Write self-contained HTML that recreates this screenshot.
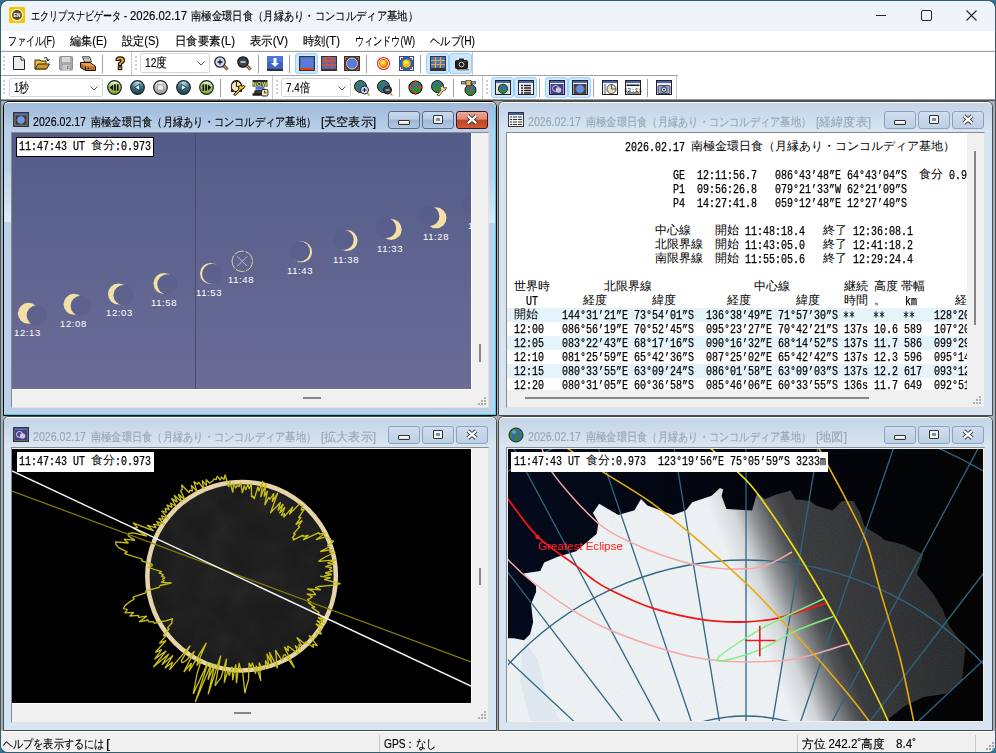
<!DOCTYPE html><html><head><meta charset="utf-8"><style>
*{margin:0;padding:0;box-sizing:border-box}
html,body{width:996px;height:753px;overflow:hidden;background:#2c7490;font-family:"Liberation Sans",sans-serif;font-size:12px;color:#000}
#win{position:absolute;left:0;top:0;width:996px;height:753px;overflow:hidden;clip-path:inset(1px round 7px)}
.a{position:absolute}
.ui{font-family:"Liberation Sans",sans-serif;font-size:12px;line-height:14px;white-space:pre;-webkit-text-stroke:0.15px currentColor}
.hm{font-family:"Liberation Mono",monospace;font-size:12px;line-height:14px;white-space:pre;transform:scaleX(0.8333);transform-origin:0 0;-webkit-text-stroke:0.25px currentColor}
.jm{font-family:"Liberation Sans",sans-serif;font-size:12px;line-height:14px;white-space:pre;margin-top:-2px}
svg{position:absolute;overflow:visible}
</style></head><body><div style="position:absolute;left:0;top:0;width:996px;height:753px;border-radius:8px;background:#2f6070"></div><div id="win"><div class="a" style="left:1px;top:1px;width:994px;height:751px;background:#fff;border-radius:7px 7px 0 0"></div><div class="a" style="left:1px;top:1px;width:994px;height:30px;background:#eef4fa;border-radius:7px 7px 0 0"></div><svg style="left:9px;top:7px" width="16" height="16" viewBox="0 0 16 16">
<rect x="0" y="0" width="16" height="16" rx="1.5" fill="#f5c400"/>
<circle cx="8" cy="8" r="6.3" fill="#fff6c8"/>
<circle cx="8" cy="8" r="5" fill="#5a4a20"/>
<text x="8" y="10" font-size="5" font-family="Liberation Sans" font-weight="bold" fill="#fff" text-anchor="middle">EN</text>
</svg><div class="a ui" style="left:31px;top:9px;transform:scaleX(0.7539);transform-origin:0 0;color:#000">エクリプスナビゲータ -</div><div class="a ui" style="left:130px;top:9px;transform:scaleX(0.9490);transform-origin:0 0;color:#000">2026.02.17</div><div class="a ui" style="left:191px;top:9px;transform:scaleX(0.8598);transform-origin:0 0;color:#000">南極金環日食（月縁あり・コンコルディア基地）</div><div class="a" style="left:876px;top:15px;width:10px;height:1px;background:#222"></div><div class="a" style="left:921px;top:10px;width:11px;height:11px;border:1px solid #222;border-radius:2px"></div><svg style="left:966px;top:10px" width="11" height="11" viewBox="0 0 11 11"><path d="M0.5 0.5L10.5 10.5M10.5 0.5L0.5 10.5" stroke="#222" stroke-width="1.1"/></svg><div class="a ui" style="left:8px;top:34px;transform:scaleX(0.7422);transform-origin:0 0;color:#000">ファイル(F)</div><div class="a ui" style="left:70px;top:34px;transform:scaleX(0.9250);transform-origin:0 0;color:#000">編集(E)</div><div class="a ui" style="left:122px;top:34px;transform:scaleX(0.9250);transform-origin:0 0;color:#000">設定(S)</div><div class="a ui" style="left:175px;top:34px;transform:scaleX(0.9574);transform-origin:0 0;color:#000">日食要素(L)</div><div class="a ui" style="left:250px;top:34px;transform:scaleX(0.9500);transform-origin:0 0;color:#000">表示(V)</div><div class="a ui" style="left:303px;top:34px;transform:scaleX(0.9408);transform-origin:0 0;color:#000">時刻(T)</div><div class="a ui" style="left:355px;top:34px;transform:scaleX(0.7564);transform-origin:0 0;color:#000">ウィンドウ(W)</div><div class="a ui" style="left:430px;top:34px;transform:scaleX(0.8543);transform-origin:0 0;color:#000">ヘルプ(H)</div><div class="a" style="left:1px;top:50px;width:994px;height:1px;background:#f0f0f0"></div><div class="a" style="left:1px;top:51px;width:994px;height:1px;background:#a0a0a0"></div><div class="a" style="left:1px;top:75px;width:677px;height:1px;background:#a0a0a0"></div><div class="a" style="left:1px;top:99px;width:994px;height:1px;background:#9a9a9a"></div><div class="a" style="left:1px;top:100px;width:994px;height:1px;background:#555"></div><div class="a" style="left:3px;top:56px;width:2px;height:2px;background:#cfcfcf"></div><div class="a" style="left:3px;top:60px;width:2px;height:2px;background:#cfcfcf"></div><div class="a" style="left:3px;top:64px;width:2px;height:2px;background:#cfcfcf"></div><div class="a" style="left:3px;top:68px;width:2px;height:2px;background:#cfcfcf"></div><svg style="left:13px;top:56px" width="13" height="14" viewBox="0 0 13 14"><path d="M0.5 0.5H8L11.5 4V13.5H0.5Z" fill="#ececec" stroke="#222"/><path d="M8 0.5V4H11.5" fill="#fff" stroke="#222"/></svg><svg style="left:34px;top:56px" width="16" height="14" viewBox="0 0 16 14"><path d="M1 4H6L7 5H12V13H1Z" fill="#e8c048" stroke="#3a2a00"/><path d="M1 13L4 8H15.5L12.5 13Z" fill="#c89a30" stroke="#3a2a00"/><path d="M10 2Q13 0 14 4" fill="none" stroke="#222" stroke-width="1"/><path d="M12.5 3.5L14 5L15.5 3" fill="none" stroke="#222"/></svg><svg style="left:59px;top:56px" width="14" height="15" viewBox="0 0 14 15"><rect x="0.5" y="0.5" width="13" height="13.5" rx="1" fill="#a8a8a8" stroke="#909090"/><rect x="3" y="1" width="8" height="5" fill="#d8d8d8"/><rect x="3.5" y="9" width="7" height="5" fill="#c8c8c8"/><rect x="8" y="10" width="1.5" height="3" fill="#888"/></svg><svg style="left:80px;top:56px" width="16" height="15" viewBox="0 0 16 15"><path d="M2.5 0.8H9.5L11.5 6H4.5Z" fill="#f4f4f4" stroke="#333" stroke-width="1"/><path d="M4 2.5H9.5M4.5 4H10" stroke="#888" stroke-width="0.8"/><path d="M0.5 6.5H10L15.5 10.5V14.5H5.5L0.5 11.5Z" fill="#b87030" stroke="#1a1000" stroke-width="1"/><path d="M1 7H9.8L14.5 10.3H5.8Z" fill="#e8a050"/><path d="M5.5 10.5V14.5" stroke="#1a1000" stroke-width="0.9"/><rect x="7.5" y="11.8" width="1.5" height="1.2" fill="#222"/></svg><div class="a" style="left:102px;top:55px;width:1px;height:18px;background:#a0a0a0"></div><svg style="left:114px;top:56px" width="12" height="15" viewBox="0 0 12 15"><path d="M2 4.5Q2 0.8 6 0.8Q10.5 0.8 10.5 4.5Q10.5 6.5 7.5 8V9.5H4.5V7Q7.5 5.5 7 4.2Q6.3 3 5 4.5Z" fill="#f0b820" stroke="#111" stroke-width="1.2"/><rect x="4.3" y="10.8" width="3.4" height="2.8" fill="#f0b820" stroke="#111" stroke-width="1.1"/></svg><div class="a" style="left:131px;top:52px;width:1px;height:23px;background:#c8c8c8"></div><div class="a" style="left:135px;top:56px;width:2px;height:2px;background:#cfcfcf"></div><div class="a" style="left:135px;top:60px;width:2px;height:2px;background:#cfcfcf"></div><div class="a" style="left:135px;top:64px;width:2px;height:2px;background:#cfcfcf"></div><div class="a" style="left:135px;top:68px;width:2px;height:2px;background:#cfcfcf"></div><div class="a" style="left:140px;top:53px;width:70px;height:20px;background:#fff;border:1px solid #d6d6d6;border-radius:2px"></div><div class="a ui" style="left:145px;top:56px;transform:scaleX(0.8177);transform-origin:0 0;color:#000;font-size:12.5px">12度</div><svg style="left:197px;top:61px" width="8" height="5" viewBox="0 0 8 5"><path d="M0.5 0.5L4 4L7.5 0.5" fill="none" stroke="#555" stroke-width="1"/></svg><svg style="left:214px;top:56px" width="15" height="15" viewBox="0 0 15 15"><circle cx="6" cy="6" r="5.2" fill="#c8dcf8" stroke="#222" stroke-width="1.3"/><path d="M3.5 6H8.5M6 3.5V8.5" stroke="#111" stroke-width="1.3"/><path d="M9.5 9.5L13.5 13.5" stroke="#222" stroke-width="3"/><path d="M9.8 9.8L13.2 13.2" stroke="#e8a040" stroke-width="1.5"/></svg><svg style="left:237px;top:56px" width="15" height="15" viewBox="0 0 15 15"><circle cx="6" cy="6" r="5.2" fill="#3a4250" stroke="#111" stroke-width="1.3"/><path d="M3.5 6H8.5" stroke="#ddd" stroke-width="1.3"/><path d="M9.5 9.5L13.5 13.5" stroke="#222" stroke-width="3"/><path d="M9.8 9.8L13.2 13.2" stroke="#e8a040" stroke-width="1.5"/></svg><div class="a" style="left:258px;top:55px;width:1px;height:18px;background:#a0a0a0"></div><svg style="left:267px;top:56px" width="16" height="15" viewBox="0 0 16 15"><rect x="0" y="0" width="16" height="13" fill="#3c64c0"/><rect x="0" y="0" width="16" height="6" fill="#4a78d8"/><path d="M6.5 2H9.5V7H12L8 11L4 7H6.5Z" fill="#fff"/><rect x="0" y="13" width="16" height="2" fill="#333"/></svg><div class="a" style="left:289px;top:55px;width:1px;height:18px;background:#a0a0a0"></div><div class="a" style="left:295px;top:53px;width:23px;height:21px;background:#cce8ff;border:1px solid #99d1ff;border-radius:3px"></div><svg style="left:299px;top:56px" width="16" height="15" viewBox="0 0 16 15"><rect x="0.5" y="0.5" width="15" height="14" fill="#4a68c8" stroke="#333"/><rect x="2" y="2" width="12" height="10" fill="#5a7ad8"/><rect x="1" y="12" width="14" height="2" fill="#e04010"/></svg><svg style="left:321px;top:56px" width="16" height="15" viewBox="0 0 16 15"><rect x="0.5" y="0.5" width="15" height="14" fill="#4a68c8" stroke="#333"/><path d="M1 5H15M1 9H15M5 1V14M11 1V14M2 3Q8 0 14 3" fill="none" stroke="#e85018" stroke-width="1.3"/><rect x="1" y="13" width="14" height="1.5" fill="#333"/></svg><svg style="left:344px;top:56px" width="16" height="15" viewBox="0 0 16 15"><rect x="0.5" y="0.5" width="15" height="14" fill="#444" stroke="#333"/><circle cx="8" cy="7.5" r="5.5" fill="#5a7ad8" stroke="#ddd" stroke-width="0.8"/><path d="M1.5 4V1.5H4M12 1.5H14.5V4M14.5 11V13.5H12M4 13.5H1.5V11" fill="none" stroke="#e84010" stroke-width="1.2"/></svg><div class="a" style="left:366px;top:55px;width:1px;height:18px;background:#a0a0a0"></div><svg style="left:377px;top:57px" width="13" height="13" viewBox="0 0 13 13"><defs><radialGradient id="sung" cx="0.4" cy="0.35" r="0.7"><stop offset="0" stop-color="#fff070"/><stop offset="0.6" stop-color="#f8c000"/><stop offset="1" stop-color="#e86000"/></radialGradient></defs><circle cx="6.5" cy="6.5" r="6" fill="#fff" stroke="#e82020" stroke-width="1.1"/><circle cx="6.5" cy="6.5" r="4.4" fill="#e82020"/><circle cx="6.5" cy="6.5" r="3.8" fill="url(#sung)"/></svg><svg style="left:399px;top:56px" width="15" height="15" viewBox="0 0 15 15"><rect x="0.5" y="0.5" width="14" height="14" fill="#2a64b0" stroke="#2050a0"/><circle cx="7.5" cy="7.5" r="4" fill="#f8c000"/><circle cx="7" cy="6.5" r="2" fill="#ffe860"/><path d="M1.5 1.5L4 4M13.5 1.5L11 4M1.5 13.5L4 11M13.5 13.5L11 11" stroke="#ff3020" stroke-width="1.4"/><path d="M1.5 1.5H4M1.5 1.5V4M13.5 1.5H11M13.5 1.5V4M1.5 13.5H4M1.5 13.5V11M13.5 13.5H11M13.5 13.5V11" stroke="#fff" stroke-width="1"/></svg><div class="a" style="left:420px;top:55px;width:1px;height:18px;background:#a0a0a0"></div><div class="a" style="left:426px;top:53px;width:23px;height:21px;background:#cce8ff;border:1px solid #99d1ff;border-radius:3px"></div><svg style="left:430px;top:56px" width="16" height="15" viewBox="0 0 16 15"><rect x="0.5" y="0.5" width="15" height="14" fill="#4a70d0" stroke="#333"/><path d="M1 4.5H15M1 8.5H15M5.5 1V12M10.5 1V12" stroke="#e8b020" stroke-width="1.2"/><rect x="1" y="12" width="14" height="2.5" fill="#333"/></svg><div class="a" style="left:449px;top:53px;width:23px;height:21px;background:#cce8ff;border:1px solid #99d1ff;border-radius:3px"></div><svg style="left:455px;top:58px" width="14" height="13" viewBox="0 0 14 13"><rect x="0.5" y="2.5" width="12" height="8" rx="1" fill="#222" stroke="#111"/><rect x="4" y="0.5" width="5" height="2.5" fill="#222"/><circle cx="6.5" cy="6.5" r="2.4" fill="none" stroke="#ccc" stroke-width="1"/><rect x="2" y="11" width="12" height="1.5" fill="#a08060"/><rect x="9.5" y="3" width="2" height="1" fill="#d03030"/></svg><div class="a" style="left:472px;top:52px;width:1px;height:23px;background:#c8c8c8"></div><div class="a" style="left:3px;top:80px;width:2px;height:2px;background:#cfcfcf"></div><div class="a" style="left:3px;top:84px;width:2px;height:2px;background:#cfcfcf"></div><div class="a" style="left:3px;top:88px;width:2px;height:2px;background:#cfcfcf"></div><div class="a" style="left:3px;top:92px;width:2px;height:2px;background:#cfcfcf"></div><div class="a" style="left:9px;top:78px;width:94px;height:19px;background:#fff;border:1px solid #d6d6d6;border-radius:2px"></div><div class="a ui" style="left:14px;top:81px;transform:scaleX(0.7518);transform-origin:0 0;color:#000;font-size:12.5px">1秒</div><svg style="left:90px;top:86px" width="8" height="5" viewBox="0 0 8 5"><path d="M0.5 0.5L4 4L7.5 0.5" fill="none" stroke="#555" stroke-width="1"/></svg><svg style="left:107px;top:80px" width="15" height="15" viewBox="0 0 15 15"><defs><radialGradient id="mb107" cx="0.5" cy="0.15" r="0.95"><stop offset="0" stop-color="#eaf5d0"/><stop offset="0.45" stop-color="#b8d868"/><stop offset="1" stop-color="#6a8a18"/></radialGradient></defs><circle cx="7.5" cy="7.5" r="6.8" fill="url(#mb107)" stroke="#1a2420" stroke-width="1.2"/><path d="M2.6 7.5L6.2 4.3V10.7Z" fill="#111"/><rect x="7" y="4.3" width="1.8" height="6.4" fill="#111"/><rect x="9.8" y="4.3" width="1.8" height="6.4" fill="#111"/></svg><svg style="left:130px;top:80px" width="15" height="15" viewBox="0 0 15 15"><defs><radialGradient id="mb130" cx="0.5" cy="0.15" r="0.95"><stop offset="0" stop-color="#c0e4ee"/><stop offset="0.45" stop-color="#3e7888"/><stop offset="1" stop-color="#0e2a34"/></radialGradient></defs><circle cx="7.5" cy="7.5" r="6.8" fill="url(#mb130)" stroke="#1a2420" stroke-width="1.2"/><path d="M4.5 7.5L9.8 4.2V10.8Z" fill="#d8eef8" stroke="#0a1a30" stroke-width="0.8"/></svg><svg style="left:153px;top:80px" width="15" height="15" viewBox="0 0 15 15"><defs><radialGradient id="mb153" cx="0.5" cy="0.15" r="0.95"><stop offset="0" stop-color="#f0f0f0"/><stop offset="0.45" stop-color="#c4c4c4"/><stop offset="1" stop-color="#8a8a8a"/></radialGradient></defs><circle cx="7.5" cy="7.5" r="6.8" fill="url(#mb153)" stroke="#1a2420" stroke-width="1.2"/><rect x="4.8" y="4.8" width="5.4" height="5.4" fill="#eeeeee" stroke="#888" stroke-width="0.7"/></svg><svg style="left:176px;top:80px" width="15" height="15" viewBox="0 0 15 15"><defs><radialGradient id="mb176" cx="0.5" cy="0.15" r="0.95"><stop offset="0" stop-color="#c0e4ee"/><stop offset="0.45" stop-color="#3e7888"/><stop offset="1" stop-color="#0e2a34"/></radialGradient></defs><circle cx="7.5" cy="7.5" r="6.8" fill="url(#mb176)" stroke="#1a2420" stroke-width="1.2"/><path d="M10.5 7.5L5.2 4.2V10.8Z" fill="#d8eef8" stroke="#0a1a30" stroke-width="0.8"/></svg><svg style="left:199px;top:80px" width="15" height="15" viewBox="0 0 15 15"><defs><radialGradient id="mb199" cx="0.5" cy="0.15" r="0.95"><stop offset="0" stop-color="#eaf5d0"/><stop offset="0.45" stop-color="#b8d868"/><stop offset="1" stop-color="#6a8a18"/></radialGradient></defs><circle cx="7.5" cy="7.5" r="6.8" fill="url(#mb199)" stroke="#1a2420" stroke-width="1.2"/><path d="M12.4 7.5L8.8 4.3V10.7Z" fill="#111"/><rect x="3.4" y="4.3" width="1.8" height="6.4" fill="#111"/><rect x="6.2" y="4.3" width="1.8" height="6.4" fill="#111"/></svg><div class="a" style="left:220px;top:79px;width:1px;height:18px;background:#a0a0a0"></div><svg style="left:230px;top:80px" width="16" height="16" viewBox="0 0 16 16"><path d="M1 11V6A5.5 5.5 0 0 1 12 5V12H1Z" fill="#3a2208"/><circle cx="6.5" cy="6.5" r="5.2" fill="#f2e6c0" stroke="#2a1a08" stroke-width="1"/><path d="M6.5 6.5V1.8M6.5 6.5H10" stroke="#2a1a08" stroke-width="1"/><path d="M3.5 14.5L9 9L8.5 7L11 4.5L12 6.5L13.2 5.2L15 6.5L13 9L11 9.5L5.5 15.5Z" fill="#f0c838" stroke="#1a1000" stroke-width="1"/></svg><svg style="left:252px;top:80px" width="16" height="16" viewBox="0 0 16 16"><rect x="0.5" y="0" width="15" height="6.5" fill="#2a2a2a"/><text x="8" y="5.6" font-size="6" font-family="Liberation Sans" font-weight="bold" fill="#d8f070" text-anchor="middle" letter-spacing="0.3">NOW</text><rect x="3.5" y="7" width="9" height="2.8" fill="#4a7ad8"/><path d="M3 10H12V15.5H0.5Z" fill="#3a3a3a"/><rect x="0.5" y="13.5" width="11" height="2" fill="#1a1a1a"/><rect x="9.5" y="9.5" width="6.5" height="6.5" rx="1.5" fill="#f2e6c0" stroke="#2a1a08" stroke-width="0.9"/><path d="M12.5 10.8V12.8H14.5" stroke="#2a1a08" stroke-width="0.9" fill="none"/></svg><div class="a" style="left:272px;top:76px;width:1px;height:23px;background:#c8c8c8"></div><div class="a" style="left:276px;top:80px;width:2px;height:2px;background:#cfcfcf"></div><div class="a" style="left:276px;top:84px;width:2px;height:2px;background:#cfcfcf"></div><div class="a" style="left:276px;top:88px;width:2px;height:2px;background:#cfcfcf"></div><div class="a" style="left:276px;top:92px;width:2px;height:2px;background:#cfcfcf"></div><div class="a" style="left:281px;top:78px;width:70px;height:19px;background:#fff;border:1px solid #d6d6d6;border-radius:2px"></div><div class="a ui" style="left:286px;top:81px;transform:scaleX(0.7897);transform-origin:0 0;color:#000;font-size:12.5px">7.4倍</div><svg style="left:338px;top:86px" width="8" height="5" viewBox="0 0 8 5"><path d="M0.5 0.5L4 4L7.5 0.5" fill="none" stroke="#555" stroke-width="1"/></svg><svg style="left:354px;top:80px" width="16" height="16" viewBox="0 0 16 16"><circle cx="6.5" cy="6.5" r="6" fill="#2e8a3a" stroke="#111" stroke-width="1"/><path d="M3 3Q5 5 4 7Q6 9 5 11M8 2Q10 4 9 6Q11 8 11 10" stroke="#3a60c8" stroke-width="2.2" fill="none"/><circle cx="10.5" cy="10" r="4" fill="#c8dcf8" stroke="#222"/><path d="M8.5 10H12.5M10.5 8V12" stroke="#111"/><path d="M13 13L15.5 15.5" stroke="#c89040" stroke-width="1.5"/></svg><svg style="left:377px;top:80px" width="16" height="16" viewBox="0 0 16 16"><circle cx="6.5" cy="6.5" r="6" fill="#2e8a3a" stroke="#111" stroke-width="1"/><path d="M3 3Q5 5 4 7Q6 9 5 11M8 2Q10 4 9 6Q11 8 11 10" stroke="#3a60c8" stroke-width="2.2" fill="none"/><circle cx="10.5" cy="10" r="4" fill="#3a4250" stroke="#111"/><path d="M8.5 10H12.5" stroke="#ddd"/><path d="M13 13L15.5 15.5" stroke="#c89040" stroke-width="1.5"/></svg><div class="a" style="left:399px;top:79px;width:1px;height:18px;background:#a0a0a0"></div><svg style="left:408px;top:80px" width="15" height="15" viewBox="0 0 15 15"><circle cx="7.5" cy="7.5" r="6.5" fill="#2e8a3a" stroke="#111" stroke-width="1.2"/><path d="M4 4Q6 6 5 8M9 3Q11 5 10 7" stroke="#3a60c8" stroke-width="2" fill="none"/><path d="M7.5 0V5M7.5 10V15M0 7.5H5M10 7.5H15" stroke="#ff3010" stroke-width="1.4"/></svg><svg style="left:431px;top:80px" width="16" height="16" viewBox="0 0 16 16"><circle cx="6.5" cy="6.5" r="6" fill="#2e8a3a" stroke="#111" stroke-width="1"/><path d="M3 3Q5 5 4 7M8 2Q10 4 9 6" stroke="#3a60c8" stroke-width="2.2" fill="none"/><path d="M6 15L10 10L9 7.5L11.5 5.5L13 8L15.5 7.5L14.5 10L12 11L8 16Z" fill="#e8d8a8" stroke="#4a3a20" stroke-width="0.8"/></svg><div class="a" style="left:453px;top:79px;width:1px;height:18px;background:#a0a0a0"></div><svg style="left:461px;top:80px" width="16" height="16" viewBox="0 0 16 16"><circle cx="9.5" cy="10" r="5.5" fill="#2e8a3a" stroke="#111" stroke-width="1"/><path d="M7 7Q9 9 8 11M11 6Q13 8 12 10" stroke="#3a60c8" stroke-width="2" fill="none"/><rect x="0.5" y="1.5" width="4" height="2.5" fill="#8aa0c0" stroke="#222" stroke-width="0.6"/><rect x="10.5" y="1.5" width="4" height="2.5" fill="#8aa0c0" stroke="#222" stroke-width="0.6"/><rect x="5" y="0.5" width="5" height="5" fill="#e0c060" stroke="#222" stroke-width="0.6"/><path d="M7.5 5L11 12" stroke="#e03020" stroke-width="1.2"/></svg><div class="a" style="left:482px;top:76px;width:1px;height:23px;background:#c8c8c8"></div><div class="a" style="left:486px;top:80px;width:2px;height:2px;background:#cfcfcf"></div><div class="a" style="left:486px;top:84px;width:2px;height:2px;background:#cfcfcf"></div><div class="a" style="left:486px;top:88px;width:2px;height:2px;background:#cfcfcf"></div><div class="a" style="left:486px;top:92px;width:2px;height:2px;background:#cfcfcf"></div><div class="a" style="left:491px;top:77px;width:23px;height:21px;background:#cce8ff;border:1px solid #99d1ff;border-radius:3px"></div><svg style="left:495px;top:80px" width="16" height="15" viewBox="0 0 16 15"><rect x="0.5" y="0.5" width="15" height="14" fill="#f4f4f4" stroke="#222"/><rect x="1" y="1" width="14" height="2" fill="#4a64b8"/><rect x="1.5" y="4" width="13" height="10" fill="#ddd"/><circle cx="8" cy="8.8" r="4.6" fill="#2e8a3a" stroke="#111" stroke-width="0.8"/><path d="M6 6Q8 8 6.5 10M9 5.5Q11 8 10 10" stroke="#3a60c8" stroke-width="1.8" fill="none"/></svg><div class="a" style="left:514px;top:77px;width:23px;height:21px;background:#cce8ff;border:1px solid #99d1ff;border-radius:3px"></div><svg style="left:518px;top:80px" width="16" height="15" viewBox="0 0 16 15"><rect x="0.5" y="0.5" width="15" height="14" fill="#f4f4f4" stroke="#222"/><rect x="1" y="1" width="14" height="2" fill="#4a64b8"/><path d="M3 5.5H13M3 8H13M3 10.5H13M3 13H13" stroke="#222" stroke-width="1.3"/><path d="M5.5 4V14" stroke="#fff" stroke-width="1"/></svg><div class="a" style="left:539px;top:79px;width:1px;height:18px;background:#a0a0a0"></div><div class="a" style="left:545px;top:77px;width:23px;height:21px;background:#cce8ff;border:1px solid #99d1ff;border-radius:3px"></div><svg style="left:549px;top:80px" width="16" height="15" viewBox="0 0 16 15"><rect x="0.5" y="0.5" width="15" height="14" fill="#f4f4f4" stroke="#222"/><rect x="1" y="1" width="14" height="2" fill="#4a64b8"/><rect x="1.5" y="4" width="13" height="10" fill="#4a3a98"/><circle cx="6.5" cy="8.5" r="3" fill="none" stroke="#ccc" stroke-width="1"/><circle cx="9.5" cy="10" r="2.8" fill="#c8c8c8"/></svg><div class="a" style="left:568px;top:77px;width:23px;height:21px;background:#cce8ff;border:1px solid #99d1ff;border-radius:3px"></div><svg style="left:572px;top:80px" width="16" height="15" viewBox="0 0 16 15"><rect x="0.5" y="0.5" width="15" height="14" fill="#f4f4f4" stroke="#222"/><rect x="1" y="1" width="14" height="2" fill="#4a64b8"/><rect x="1.5" y="4" width="13" height="10" fill="#444"/><circle cx="8" cy="9" r="4" fill="#5a90e8"/><rect x="7.3" y="4.2" width="1.4" height="1.2" fill="#e84010"/><rect x="7.3" y="12.6" width="1.4" height="1.2" fill="#e84010"/><rect x="3.2" y="8.3" width="1.2" height="1.4" fill="#e84010"/><rect x="11.6" y="8.3" width="1.2" height="1.4" fill="#e84010"/></svg><div class="a" style="left:593px;top:79px;width:1px;height:18px;background:#a0a0a0"></div><svg style="left:602px;top:80px" width="16" height="15" viewBox="0 0 16 15"><rect x="0.5" y="0.5" width="15" height="14" fill="#f4f4f4" stroke="#222"/><rect x="1" y="1" width="14" height="2" fill="#4a64b8"/><circle cx="9.5" cy="9" r="4.5" fill="#e8dcc8" stroke="#333" stroke-width="0.8"/><path d="M9.5 9V4.5M9.5 9H14" stroke="#333" stroke-width="0.8"/><path d="M2 5H4M2 7H4M2 9H4M2 11H4M2 13H4" stroke="#333" stroke-width="0.8"/></svg><svg style="left:625px;top:80px" width="16" height="15" viewBox="0 0 16 15"><rect x="0.5" y="0.5" width="15" height="14" fill="#f4f4f4" stroke="#222"/><rect x="1" y="1" width="14" height="2" fill="#4a64b8"/><rect x="1.5" y="4.5" width="13" height="1.5" fill="#222"/><rect x="1.5" y="12" width="13" height="2" fill="#888"/><text x="8" y="11.5" font-size="6" font-family="Liberation Mono" fill="#111" text-anchor="middle">12:11</text></svg><div class="a" style="left:647px;top:79px;width:1px;height:18px;background:#a0a0a0"></div><svg style="left:656px;top:80px" width="16" height="15" viewBox="0 0 16 15"><rect x="0.5" y="0.5" width="15" height="14" fill="#f4f4f4" stroke="#222"/><rect x="1" y="1" width="14" height="2" fill="#4a64b8"/><rect x="2" y="5.5" width="12" height="8" rx="1" fill="#8aa0e0" stroke="#333" stroke-width="0.8"/><circle cx="8" cy="9.5" r="2.6" fill="#fff" stroke="#222" stroke-width="1"/><circle cx="8" cy="9.5" r="1" fill="#222"/></svg><div class="a" style="left:676px;top:76px;width:1px;height:23px;background:#c8c8c8"></div><div class="a" style="left:1px;top:101px;width:994px;height:631px;background:#ababab"></div><div class="a" style="left:3px;top:101px;width:494px;height:315px;background:#b9d1ea;border:1px solid #0a0a0a;border-radius:6px 6px 0 0"></div><div class="a" style="left:4px;top:102px;width:492px;height:30px;background:linear-gradient(#a0b9d7,#bad2eb);border-radius:5px 5px 0 0;border-top:1px solid #fff"></div><div class="a" style="left:4px;top:171px;width:7px;height:51px;background:linear-gradient(#bcd4ec,#dfeaf6)"></div><div class="a" style="left:489px;top:178px;width:6px;height:45px;background:linear-gradient(#bcd4ec,#dfeaf6)"></div><div class="a" style="left:495px;top:107px;width:1px;height:308px;background:#34d0f0"></div><div class="a" style="left:4px;top:414px;width:492px;height:1px;background:#34d0f0"></div><svg style="left:13px;top:112px" width="16" height="15" viewBox="0 0 16 15"><rect x="0.5" y="0.5" width="15" height="14" fill="#555" stroke="#333"/><rect x="1" y="1" width="14" height="2" fill="#4060a8"/><rect x="2" y="3" width="12" height="10" fill="#3a3a3a" stroke="#999" stroke-width="0.6"/><circle cx="8" cy="8" r="3.8" fill="#6a9ce8"/><rect x="7.4" y="3.4" width="1.2" height="1" fill="#e84010"/><rect x="7.4" y="11.6" width="1.2" height="1" fill="#e84010"/><rect x="3.3" y="7.4" width="1" height="1.2" fill="#e84010"/><rect x="11.7" y="7.4" width="1" height="1.2" fill="#e84010"/></svg><div class="a ui" style="left:33px;top:115px;transform:scaleX(0.8824);transform-origin:0 0;color:#000">2026.02.17</div><div class="a ui" style="left:91px;top:115px;transform:scaleX(0.8523);transform-origin:0 0;color:#000">南極金環日食（月縁あり・コンコルディア基地）</div><div class="a ui" style="left:321px;top:115px;transform:scaleX(1.0060);transform-origin:0 0;color:#000">[天空表示]</div><div class="a" style="left:388px;top:111px;width:32px;height:18px;background:linear-gradient(#c8daee 0%,#b8cde6 45%,#9fb8d6 50%,#b0c8e2 100%);border:1px solid #5a6e8c;border-radius:3px"></div><div class="a" style="left:398px;top:120px;width:12px;height:5px;background:linear-gradient(#fff,#ddd);border:1px solid #333;border-radius:1px"></div><div class="a" style="left:422px;top:111px;width:32px;height:18px;background:linear-gradient(#c8daee 0%,#b8cde6 45%,#9fb8d6 50%,#b0c8e2 100%);border:1px solid #5a6e8c;border-radius:3px"></div><div class="a" style="left:433px;top:115px;width:10px;height:9px;background:#f4f4f4;border:1px solid #333;border-radius:1px"></div><div class="a" style="left:436px;top:118px;width:4px;height:3px;background:#7a90b0"></div><div class="a" style="left:456px;top:111px;width:32px;height:18px;background:linear-gradient(#e8a898 0%,#dc8a78 45%,#c4401e 50%,#d05a38 100%);border:1px solid #4a1018;border-radius:3px"></div><svg style="left:466px;top:114px" width="12" height="11" viewBox="0 0 12 11"><path d="M1.8 1.8L10.2 9.2M10.2 1.8L1.8 9.2" stroke="#333" stroke-width="4"/><path d="M1.8 1.8L10.2 9.2M10.2 1.8L1.8 9.2" stroke="#fff" stroke-width="2.2"/></svg><div class="a" style="left:11px;top:132px;width:478px;height:276px;border-top:1px solid #8a8a8a;border-left:1px solid #8a8a8a;border-bottom:1px solid #e2e2e2;border-right:1px solid #e2e2e2;background:#f0f0f0"></div><div class="a" style="left:498px;top:101px;width:495px;height:315px;background:#d7e4f2;border:1px solid #4a4a4a;border-radius:6px 6px 0 0"></div><div class="a" style="left:499px;top:102px;width:493px;height:30px;background:linear-gradient(#c3d4e7,#d9e6f3);border-radius:5px 5px 0 0;border-top:1px solid #fff"></div><svg style="left:508px;top:112px" width="16" height="15" viewBox="0 0 16 15"><rect x="0.5" y="0.5" width="15" height="14" fill="#f4f4f4" stroke="#333"/><rect x="1" y="1" width="14" height="2" fill="#4060a8"/><path d="M2 5H14M2 7.5H14M2 10H14M2 12.5H14" stroke="#333" stroke-width="1.2"/><path d="M4.5 4V14M9.5 4V14" stroke="#fff" stroke-width="0.8"/></svg><div class="a ui" style="left:528px;top:115px;transform:scaleX(0.8824);transform-origin:0 0;color:#9aa6b4">2026.02.17</div><div class="a ui" style="left:586px;top:115px;transform:scaleX(0.8523);transform-origin:0 0;color:#9aa6b4">南極金環日食（月縁あり・コンコルディア基地）</div><div class="a ui" style="left:816px;top:115px;transform:scaleX(1.0060);transform-origin:0 0;color:#9aa6b4">[経緯度表]</div><div class="a" style="left:884px;top:111px;width:32px;height:18px;background:linear-gradient(#d0deee 0%,#c6d6e8 50%,#bccfe4 100%);border:1px solid #8ea2bc;border-radius:3px"></div><div class="a" style="left:894px;top:120px;width:12px;height:5px;background:linear-gradient(#fff,#ddd);border:1px solid #333;border-radius:1px"></div><div class="a" style="left:918px;top:111px;width:32px;height:18px;background:linear-gradient(#d0deee 0%,#c6d6e8 50%,#bccfe4 100%);border:1px solid #8ea2bc;border-radius:3px"></div><div class="a" style="left:929px;top:115px;width:10px;height:9px;background:#f4f4f4;border:1px solid #333;border-radius:1px"></div><div class="a" style="left:932px;top:118px;width:4px;height:3px;background:#7a90b0"></div><div class="a" style="left:952px;top:111px;width:32px;height:18px;background:linear-gradient(#d0deee 0%,#c6d6e8 50%,#bccfe4 100%);border:1px solid #8ea2bc;border-radius:3px"></div><svg style="left:962px;top:114px" width="12" height="11" viewBox="0 0 12 11"><path d="M1.8 1.8L10.2 9.2M10.2 1.8L1.8 9.2" stroke="#333" stroke-width="4"/><path d="M1.8 1.8L10.2 9.2M10.2 1.8L1.8 9.2" stroke="#fff" stroke-width="2.2"/></svg><div class="a" style="left:506px;top:132px;width:479px;height:276px;border-top:1px solid #8a8a8a;border-left:1px solid #8a8a8a;border-bottom:1px solid #e2e2e2;border-right:1px solid #e2e2e2;background:#f0f0f0"></div><div class="a" style="left:3px;top:416px;width:494px;height:315px;background:#d7e4f2;border:1px solid #4a4a4a;border-radius:6px 6px 0 0"></div><div class="a" style="left:4px;top:417px;width:492px;height:30px;background:linear-gradient(#c3d4e7,#d9e6f3);border-radius:5px 5px 0 0;border-top:1px solid #fff"></div><svg style="left:13px;top:427px" width="16" height="15" viewBox="0 0 16 15"><rect x="0.5" y="0.5" width="15" height="14" fill="#555" stroke="#333"/><rect x="1" y="1" width="14" height="2" fill="#4060a8"/><rect x="2" y="3" width="12" height="10" fill="#3a3a3a" stroke="#999" stroke-width="0.6"/><rect x="2" y="3" width="12" height="10" fill="#4a3a98"/><circle cx="6.5" cy="7.5" r="3" fill="none" stroke="#ddd" stroke-width="1"/><circle cx="9.5" cy="9" r="2.8" fill="#c8c8c8"/></svg><div class="a ui" style="left:33px;top:430px;transform:scaleX(0.8824);transform-origin:0 0;color:#9aa6b4">2026.02.17</div><div class="a ui" style="left:91px;top:430px;transform:scaleX(0.8523);transform-origin:0 0;color:#9aa6b4">南極金環日食（月縁あり・コンコルディア基地）</div><div class="a ui" style="left:321px;top:430px;transform:scaleX(1.0060);transform-origin:0 0;color:#9aa6b4">[拡大表示]</div><div class="a" style="left:388px;top:426px;width:32px;height:18px;background:linear-gradient(#d0deee 0%,#c6d6e8 50%,#bccfe4 100%);border:1px solid #8ea2bc;border-radius:3px"></div><div class="a" style="left:398px;top:435px;width:12px;height:5px;background:linear-gradient(#fff,#ddd);border:1px solid #333;border-radius:1px"></div><div class="a" style="left:422px;top:426px;width:32px;height:18px;background:linear-gradient(#d0deee 0%,#c6d6e8 50%,#bccfe4 100%);border:1px solid #8ea2bc;border-radius:3px"></div><div class="a" style="left:433px;top:430px;width:10px;height:9px;background:#f4f4f4;border:1px solid #333;border-radius:1px"></div><div class="a" style="left:436px;top:433px;width:4px;height:3px;background:#7a90b0"></div><div class="a" style="left:456px;top:426px;width:32px;height:18px;background:linear-gradient(#d0deee 0%,#c6d6e8 50%,#bccfe4 100%);border:1px solid #8ea2bc;border-radius:3px"></div><svg style="left:466px;top:429px" width="12" height="11" viewBox="0 0 12 11"><path d="M1.8 1.8L10.2 9.2M10.2 1.8L1.8 9.2" stroke="#333" stroke-width="4"/><path d="M1.8 1.8L10.2 9.2M10.2 1.8L1.8 9.2" stroke="#fff" stroke-width="2.2"/></svg><div class="a" style="left:11px;top:447px;width:478px;height:276px;border-top:1px solid #8a8a8a;border-left:1px solid #8a8a8a;border-bottom:1px solid #e2e2e2;border-right:1px solid #e2e2e2;background:#f0f0f0"></div><div class="a" style="left:498px;top:416px;width:495px;height:315px;background:#d7e4f2;border:1px solid #4a4a4a;border-radius:6px 6px 0 0"></div><div class="a" style="left:499px;top:417px;width:493px;height:30px;background:linear-gradient(#c3d4e7,#d9e6f3);border-radius:5px 5px 0 0;border-top:1px solid #fff"></div><svg style="left:508px;top:427px" width="16" height="15" viewBox="0 0 16 15"><circle cx="8" cy="8" r="7" fill="#2e8a3a" stroke="#222" stroke-width="1"/><path d="M4 4Q7 6 5 9Q7 11 6 14M10 2Q12 5 10 7Q13 9 12 12" stroke="#3a60c8" stroke-width="2.4" fill="none"/><circle cx="6" cy="5" r="2" fill="#fff" opacity="0.3"/></svg><div class="a ui" style="left:528px;top:430px;transform:scaleX(0.8824);transform-origin:0 0;color:#9aa6b4">2026.02.17</div><div class="a ui" style="left:586px;top:430px;transform:scaleX(0.8523);transform-origin:0 0;color:#9aa6b4">南極金環日食（月縁あり・コンコルディア基地）</div><div class="a ui" style="left:816px;top:430px;transform:scaleX(1.0107);transform-origin:0 0;color:#9aa6b4">[地図]</div><div class="a" style="left:884px;top:426px;width:32px;height:18px;background:linear-gradient(#d0deee 0%,#c6d6e8 50%,#bccfe4 100%);border:1px solid #8ea2bc;border-radius:3px"></div><div class="a" style="left:894px;top:435px;width:12px;height:5px;background:linear-gradient(#fff,#ddd);border:1px solid #333;border-radius:1px"></div><div class="a" style="left:918px;top:426px;width:32px;height:18px;background:linear-gradient(#d0deee 0%,#c6d6e8 50%,#bccfe4 100%);border:1px solid #8ea2bc;border-radius:3px"></div><div class="a" style="left:929px;top:430px;width:10px;height:9px;background:#f4f4f4;border:1px solid #333;border-radius:1px"></div><div class="a" style="left:932px;top:433px;width:4px;height:3px;background:#7a90b0"></div><div class="a" style="left:952px;top:426px;width:32px;height:18px;background:linear-gradient(#d0deee 0%,#c6d6e8 50%,#bccfe4 100%);border:1px solid #8ea2bc;border-radius:3px"></div><svg style="left:962px;top:429px" width="12" height="11" viewBox="0 0 12 11"><path d="M1.8 1.8L10.2 9.2M10.2 1.8L1.8 9.2" stroke="#333" stroke-width="4"/><path d="M1.8 1.8L10.2 9.2M10.2 1.8L1.8 9.2" stroke="#fff" stroke-width="2.2"/></svg><div class="a" style="left:506px;top:447px;width:479px;height:276px;border-top:1px solid #8a8a8a;border-left:1px solid #8a8a8a;border-bottom:1px solid #e2e2e2;border-right:1px solid #e2e2e2;background:#f0f0f0"></div><div class="a" style="left:1px;top:731px;width:994px;height:21px;background:#f0f0f0;border-top:1px solid #fff"></div><div class="a" style="left:379px;top:735px;width:1px;height:17px;background:#c8c8c8"></div><div class="a" style="left:797px;top:735px;width:1px;height:17px;background:#c8c8c8"></div><div class="a" style="left:975px;top:735px;width:1px;height:17px;background:#c8c8c8"></div><div class="a ui" style="left:3px;top:737px;transform:scaleX(0.8417);transform-origin:0 0;color:#000">ヘルプを表示するには</div><div class="a ui" style="left:106px;top:737px;transform:scaleX(1.1963);transform-origin:0 0;color:#000">[</div><div class="a ui" style="left:384px;top:737px;transform:scaleX(0.8477);transform-origin:0 0;color:#000">GPS：なし</div><div class="a ui" style="left:802px;top:737px;transform:scaleX(0.9657);transform-origin:0 0;color:#000">方位 242.2˚高度　8.4˚</div><div class="a" style="left:992px;top:742px;width:2px;height:2px;background:#a8a8a8"></div><div class="a" style="left:989px;top:745px;width:2px;height:2px;background:#a8a8a8"></div><div class="a" style="left:992px;top:745px;width:2px;height:2px;background:#a8a8a8"></div><div class="a" style="left:986px;top:748px;width:2px;height:2px;background:#a8a8a8"></div><div class="a" style="left:989px;top:748px;width:2px;height:2px;background:#a8a8a8"></div><div class="a" style="left:992px;top:748px;width:2px;height:2px;background:#a8a8a8"></div><svg style="left:12px;top:133px" width="459" height="256" viewBox="12 133 459 256"><defs><linearGradient id="skyg" x1="0" y1="0" x2="0" y2="1"><stop offset="0" stop-color="#535c89"/><stop offset="1" stop-color="#6b6c96"/></linearGradient><clipPath id="skyc"><rect x="12" y="133" width="459" height="256"/></clipPath></defs><g clip-path="url(#skyc)"><rect x="12" y="133" width="459" height="256" fill="url(#skyg)"/><rect x="195" y="133" width="1" height="256" fill="#4a4c6c"/><mask id="mk0"><rect x="13.399999999999999" y="298.3" width="30" height="30" fill="#fff"/><circle cx="36.775" cy="315.3" r="10.1" fill="#000"/></mask><circle cx="36.775" cy="315.3" r="10.1" fill="#565a8a" opacity="0.4"/><circle cx="28.4" cy="313.3" r="10.5" fill="#f3e0a6" mask="url(#mk0)"/><text x="14" y="336" font-family="Liberation Sans" font-size="9.5" letter-spacing="0.6" fill="#fff">12:13</text><mask id="mk1"><rect x="59.0" y="289.3" width="30" height="30" fill="#fff"/><circle cx="80.7" cy="305.90000000000003" r="10.1" fill="#000"/></mask><circle cx="80.7" cy="305.90000000000003" r="10.1" fill="#565a8a" opacity="0.4"/><circle cx="74.0" cy="304.3" r="10.5" fill="#f3e0a6" mask="url(#mk1)"/><text x="60" y="327" font-family="Liberation Sans" font-size="9.5" letter-spacing="0.6" fill="#fff">12:08</text><mask id="mk2"><rect x="103.5" y="279.0" width="30" height="30" fill="#fff"/><circle cx="123.525" cy="295.2" r="10.1" fill="#000"/></mask><circle cx="123.525" cy="295.2" r="10.1" fill="#565a8a" opacity="0.4"/><circle cx="118.5" cy="294.0" r="10.5" fill="#f3e0a6" mask="url(#mk2)"/><text x="106" y="316" font-family="Liberation Sans" font-size="9.5" letter-spacing="0.6" fill="#fff">12:03</text><mask id="mk3"><rect x="149.0" y="268.5" width="30" height="30" fill="#fff"/><circle cx="167.35" cy="284.3" r="10.1" fill="#000"/></mask><circle cx="167.35" cy="284.3" r="10.1" fill="#565a8a" opacity="0.4"/><circle cx="164.0" cy="283.5" r="10.5" fill="#f3e0a6" mask="url(#mk3)"/><text x="151" y="306" font-family="Liberation Sans" font-size="9.5" letter-spacing="0.6" fill="#fff">11:58</text><mask id="mk4"><rect x="195.5" y="258.5" width="30" height="30" fill="#fff"/><circle cx="212.175" cy="273.9" r="10.1" fill="#000"/></mask><circle cx="212.175" cy="273.9" r="10.1" fill="#565a8a" opacity="0.4"/><circle cx="210.5" cy="273.5" r="10.5" fill="#f3e0a6" mask="url(#mk4)"/><text x="196" y="296" font-family="Liberation Sans" font-size="9.5" letter-spacing="0.6" fill="#fff">11:53</text><circle cx="242.2" cy="261.3" r="10.2" fill="none" stroke="#e0d098" stroke-width="1" stroke-dasharray="12 1.5 9 1.5 14 1.5 10 1.5"/><path d="M237.2 266.3L247.2 256.3M237.2 256.3L247.2 266.3" stroke="#b8b8c8" stroke-width="1"/><text x="228" y="283" font-family="Liberation Sans" font-size="9.5" letter-spacing="0.6" fill="#fff">11:48</text><mask id="mk6"><rect x="286.5" y="236.8" width="30" height="30" fill="#fff"/><circle cx="299.825" cy="251.4" r="10.1" fill="#000"/></mask><circle cx="299.825" cy="251.4" r="10.1" fill="#565a8a" opacity="0.4"/><circle cx="301.5" cy="251.8" r="10.5" fill="#f3e0a6" mask="url(#mk6)"/><text x="287" y="274" font-family="Liberation Sans" font-size="9.5" letter-spacing="0.6" fill="#fff">11:43</text><mask id="mk7"><rect x="332.0" y="225.6" width="30" height="30" fill="#fff"/><circle cx="343.65" cy="239.79999999999998" r="10.1" fill="#000"/></mask><circle cx="343.65" cy="239.79999999999998" r="10.1" fill="#565a8a" opacity="0.4"/><circle cx="347.0" cy="240.6" r="10.5" fill="#f3e0a6" mask="url(#mk7)"/><text x="333" y="263" font-family="Liberation Sans" font-size="9.5" letter-spacing="0.6" fill="#fff">11:38</text><mask id="mk8"><rect x="376.2" y="214.4" width="30" height="30" fill="#fff"/><circle cx="386.175" cy="228.20000000000002" r="10.1" fill="#000"/></mask><circle cx="386.175" cy="228.20000000000002" r="10.1" fill="#565a8a" opacity="0.4"/><circle cx="391.2" cy="229.4" r="10.5" fill="#f3e0a6" mask="url(#mk8)"/><text x="377" y="252" font-family="Liberation Sans" font-size="9.5" letter-spacing="0.6" fill="#fff">11:33</text><mask id="mk9"><rect x="421.0" y="202.8" width="30" height="30" fill="#fff"/><circle cx="429.3" cy="216.20000000000002" r="10.1" fill="#000"/></mask><circle cx="429.3" cy="216.20000000000002" r="10.1" fill="#565a8a" opacity="0.4"/><circle cx="436.0" cy="217.8" r="10.5" fill="#f3e0a6" mask="url(#mk9)"/><text x="423" y="240" font-family="Liberation Sans" font-size="9.5" letter-spacing="0.6" fill="#fff">11:28</text><mask id="mk10"><rect x="466.0" y="191.0" width="30" height="30" fill="#fff"/><circle cx="472.625" cy="204.0" r="10.1" fill="#000"/></mask><circle cx="472.625" cy="204.0" r="10.1" fill="#565a8a" opacity="0.4"/><circle cx="481.0" cy="206.0" r="10.5" fill="#f3e0a6" mask="url(#mk10)"/><text x="468" y="229" font-family="Liberation Sans" font-size="9.5" letter-spacing="0.6" fill="#fff">11:23</text></g></svg><div class="a" style="left:12px;top:389px;width:459px;height:1px;background:#fff"></div><div class="a" style="left:471px;top:133px;width:1px;height:256px;background:#fff"></div><div class="a" style="left:479px;top:344px;width:2px;height:18px;background:#858585"></div><div class="a" style="left:303px;top:397px;width:18px;height:2px;background:#858585"></div><div class="a" style="left:484px;top:397px;width:2px;height:2px;background:#b0b0b0"></div><div class="a" style="left:481px;top:400px;width:2px;height:2px;background:#b0b0b0"></div><div class="a" style="left:484px;top:400px;width:2px;height:2px;background:#b0b0b0"></div><div class="a" style="left:478px;top:403px;width:2px;height:2px;background:#b0b0b0"></div><div class="a" style="left:481px;top:403px;width:2px;height:2px;background:#b0b0b0"></div><div class="a" style="left:484px;top:403px;width:2px;height:2px;background:#b0b0b0"></div><div class="a" style="left:16px;top:137px;width:138px;height:20px;background:#fff;border:1px solid #000"></div><div class="a hm" style="left:19px;top:140px;color:#000;">11:47:43 UT </div><div class="a jm" style="left:91px;top:140px;color:#000;">食分</div><div class="a hm" style="left:115px;top:140px;color:#000;">:0.973</div><div class="a" style="left:507px;top:133px;width:460px;height:257px;background:#fff;overflow:hidden"><div class="a" style="left:0px;top:175px;width:460px;height:14px;background:#e5f3fb"></div><div class="a" style="left:0px;top:203px;width:460px;height:14px;background:#e5f3fb"></div><div class="a" style="left:0px;top:231px;width:460px;height:14px;background:#e5f3fb"></div><div class="a hm" style="left:117.5px;top:8px;color:#000;">2026.02.17 </div><div class="a jm" style="left:183.5px;top:8px;color:#000;">南極金環日食（月縁あり・コンコルディア基地）</div><div class="a hm" style="left:165.5px;top:36px;color:#000;">GE  12:11:56.7   086°43’48”E 64°43’04”S  </div><div class="a jm" style="left:411.5px;top:36px;color:#000;">食分</div><div class="a hm" style="left:435.5px;top:36px;color:#000;"> 0.973</div><div class="a hm" style="left:165.5px;top:50px;color:#000;">P1  09:56:26.8   079°21’33”W 62°21’09”S</div><div class="a hm" style="left:165.5px;top:64px;color:#000;">P4  14:27:41.8   059°12’48”E 12°27’40”S</div><div class="a jm" style="left:147.5px;top:92px;color:#000;">中心線</div><div class="a jm" style="left:207.5px;top:92px;color:#000;">開始</div><div class="a hm" style="left:231.5px;top:92px;color:#000;"> 11:48:18.4   </div><div class="a jm" style="left:315.5px;top:92px;color:#000;">終了</div><div class="a hm" style="left:339.5px;top:92px;color:#000;"> 12:36:08.1</div><div class="a jm" style="left:147.5px;top:106px;color:#000;">北限界線</div><div class="a jm" style="left:207.5px;top:106px;color:#000;">開始</div><div class="a hm" style="left:231.5px;top:106px;color:#000;"> 11:43:05.0   </div><div class="a jm" style="left:315.5px;top:106px;color:#000;">終了</div><div class="a hm" style="left:339.5px;top:106px;color:#000;"> 12:41:18.2</div><div class="a jm" style="left:147.5px;top:120px;color:#000;">南限界線</div><div class="a jm" style="left:207.5px;top:120px;color:#000;">開始</div><div class="a hm" style="left:231.5px;top:120px;color:#000;"> 11:55:05.6   </div><div class="a jm" style="left:315.5px;top:120px;color:#000;">終了</div><div class="a hm" style="left:339.5px;top:120px;color:#000;"> 12:29:24.4</div><div class="a jm" style="left:6.5px;top:148px;color:#000;">世界時</div><div class="a jm" style="left:96.5px;top:148px;color:#000;">北限界線</div><div class="a jm" style="left:246.5px;top:148px;color:#000;">中心線</div><div class="a jm" style="left:336.5px;top:148px;color:#000;">継続</div><div class="a jm" style="left:366.5px;top:148px;color:#000;">高度</div><div class="a jm" style="left:393.5px;top:148px;color:#000;">帯幅</div><div class="a hm" style="left:18.5px;top:162px;color:#000;">UT</div><div class="a jm" style="left:75.5px;top:162px;color:#000;">経度</div><div class="a jm" style="left:144.5px;top:162px;color:#000;">緯度</div><div class="a jm" style="left:219.5px;top:162px;color:#000;">経度</div><div class="a jm" style="left:288.5px;top:162px;color:#000;">緯度</div><div class="a jm" style="left:336.5px;top:162px;color:#000;">時間</div><div class="a jm" style="left:366.5px;top:162px;color:#000;">。</div><div class="a hm" style="left:398.3px;top:162px;color:#000;">km</div><div class="a jm" style="left:447.5px;top:162px;color:#000;">経度</div><div class="a jm" style="left:6.5px;top:176px;color:#000;">開始</div><div class="a hm" style="left:54.5px;top:176px;color:#000;">144°31’21”E 73°54’01”S</div><div class="a hm" style="left:198.5px;top:176px;color:#000;">136°38’49”E 71°57’30”S</div><svg style="left:336.1px;top:177.8px" width="6" height="7" viewBox="0 0 6 7"><path d="M3 0.3V6.7M0.8 1.8L5.2 5.2M5.2 1.8L0.8 5.2" stroke="#000" stroke-width="0.9"/></svg><svg style="left:342.1px;top:177.8px" width="6" height="7" viewBox="0 0 6 7"><path d="M3 0.3V6.7M0.8 1.8L5.2 5.2M5.2 1.8L0.8 5.2" stroke="#000" stroke-width="0.9"/></svg><svg style="left:366.1px;top:177.8px" width="6" height="7" viewBox="0 0 6 7"><path d="M3 0.3V6.7M0.8 1.8L5.2 5.2M5.2 1.8L0.8 5.2" stroke="#000" stroke-width="0.9"/></svg><svg style="left:372.1px;top:177.8px" width="6" height="7" viewBox="0 0 6 7"><path d="M3 0.3V6.7M0.8 1.8L5.2 5.2M5.2 1.8L0.8 5.2" stroke="#000" stroke-width="0.9"/></svg><svg style="left:396.1px;top:177.8px" width="6" height="7" viewBox="0 0 6 7"><path d="M3 0.3V6.7M0.8 1.8L5.2 5.2M5.2 1.8L0.8 5.2" stroke="#000" stroke-width="0.9"/></svg><svg style="left:402.1px;top:177.8px" width="6" height="7" viewBox="0 0 6 7"><path d="M3 0.3V6.7M0.8 1.8L5.2 5.2M5.2 1.8L0.8 5.2" stroke="#000" stroke-width="0.9"/></svg><div class="a hm" style="left:426.5px;top:176px;color:#000;">128°20’00”E</div><div class="a hm" style="left:6.5px;top:190px;color:#000;">12:00</div><div class="a hm" style="left:54.5px;top:190px;color:#000;">086°56’19”E 70°52’45”S</div><div class="a hm" style="left:198.5px;top:190px;color:#000;">095°23’27”E 70°42’21”S</div><div class="a hm" style="left:336.5px;top:190px;color:#000;">137s</div><div class="a hm" style="left:366.5px;top:190px;color:#000;">10.6</div><div class="a hm" style="left:396.5px;top:190px;color:#000;">589 </div><div class="a hm" style="left:426.5px;top:190px;color:#000;">107°20’00”E</div><div class="a hm" style="left:6.5px;top:204px;color:#000;">12:05</div><div class="a hm" style="left:54.5px;top:204px;color:#000;">083°22’43”E 68°17’16”S</div><div class="a hm" style="left:198.5px;top:204px;color:#000;">090°16’32”E 68°14’52”S</div><div class="a hm" style="left:336.5px;top:204px;color:#000;">137s</div><div class="a hm" style="left:366.5px;top:204px;color:#000;">11.7</div><div class="a hm" style="left:396.5px;top:204px;color:#000;">586 </div><div class="a hm" style="left:426.5px;top:204px;color:#000;">099°29’00”E</div><div class="a hm" style="left:6.5px;top:218px;color:#000;">12:10</div><div class="a hm" style="left:54.5px;top:218px;color:#000;">081°25’59”E 65°42’36”S</div><div class="a hm" style="left:198.5px;top:218px;color:#000;">087°25’02”E 65°42’42”S</div><div class="a hm" style="left:336.5px;top:218px;color:#000;">137s</div><div class="a hm" style="left:366.5px;top:218px;color:#000;">12.3</div><div class="a hm" style="left:396.5px;top:218px;color:#000;">596 </div><div class="a hm" style="left:426.5px;top:218px;color:#000;">095°14’00”E</div><div class="a hm" style="left:6.5px;top:232px;color:#000;">12:15</div><div class="a hm" style="left:54.5px;top:232px;color:#000;">080°33’55”E 63°09’24”S</div><div class="a hm" style="left:198.5px;top:232px;color:#000;">086°01’58”E 63°09’03”S</div><div class="a hm" style="left:336.5px;top:232px;color:#000;">137s</div><div class="a hm" style="left:366.5px;top:232px;color:#000;">12.2</div><div class="a hm" style="left:396.5px;top:232px;color:#000;">617 </div><div class="a hm" style="left:426.5px;top:232px;color:#000;">093°12’00”E</div><div class="a hm" style="left:6.5px;top:246px;color:#000;">12:20</div><div class="a hm" style="left:54.5px;top:246px;color:#000;">080°31’05”E 60°36’58”S</div><div class="a hm" style="left:198.5px;top:246px;color:#000;">085°46’06”E 60°33’55”S</div><div class="a hm" style="left:336.5px;top:246px;color:#000;">136s</div><div class="a hm" style="left:366.5px;top:246px;color:#000;">11.7</div><div class="a hm" style="left:396.5px;top:246px;color:#000;">649 </div><div class="a hm" style="left:426.5px;top:246px;color:#000;">092°51’00”E</div></div><div class="a" style="left:974px;top:151px;width:2px;height:174px;background:#858585"></div><div class="a" style="left:525px;top:397px;width:344px;height:2px;background:#858585"></div><div class="a" style="left:979px;top:396px;width:2px;height:2px;background:#b0b0b0"></div><div class="a" style="left:976px;top:399px;width:2px;height:2px;background:#b0b0b0"></div><div class="a" style="left:979px;top:399px;width:2px;height:2px;background:#b0b0b0"></div><div class="a" style="left:973px;top:402px;width:2px;height:2px;background:#b0b0b0"></div><div class="a" style="left:976px;top:402px;width:2px;height:2px;background:#b0b0b0"></div><div class="a" style="left:979px;top:402px;width:2px;height:2px;background:#b0b0b0"></div><svg style="left:12px;top:449px" width="459" height="254" viewBox="12 449 459 254"><defs><clipPath id="zc"><rect x="12" y="449" width="459" height="254"/></clipPath><radialGradient id="mg" cx="0.45" cy="0.45" r="0.6"><stop offset="0" stop-color="#1d1d1d"/><stop offset="0.7" stop-color="#1b1b1b"/><stop offset="1" stop-color="#171717"/></radialGradient><filter id="tex" x="0" y="0" width="1" height="1"><feTurbulence type="fractalNoise" baseFrequency="0.035" numOctaves="3" seed="3"/><feColorMatrix values="0 0 0 0 0.13  0 0 0 0 0.13  0 0 0 0 0.13  0 0 0 0.9 -0.2"/><feComposite in2="SourceGraphic" operator="in"/></filter></defs><g clip-path="url(#zc)"><rect x="12" y="449" width="459" height="254" fill="#000"/><circle cx="241.6" cy="576.2" r="96.5" fill="#e6d4a8"/><circle cx="241.6" cy="576.2" r="92.0" fill="url(#mg)"/><circle cx="241.6" cy="576.2" r="92.0" fill="#fff" filter="url(#tex)" opacity="0.22"/><polyline points="320.1,576.2 330.7,577.9 324.2,579.3 331.4,581.3 340.5,583.7 334.8,585.1 325.5,585.8 318.7,586.5 315.2,587.5 320.8,589.9 307.4,588.9 313.4,591.5 314.3,593.1 315.5,594.9 306.8,594.0 312.6,597.0 310.6,597.9 309.4,598.9 307.3,599.7 311.6,602.7 308.1,602.8 315.0,607.2 311.6,607.4 319.3,612.6 317.7,613.6 325.7,619.5 318.0,617.5 324.9,623.3 316.7,620.5 323.2,626.5 315.8,623.9 321.7,629.9 318.7,630.0 321.5,634.2 316.5,632.8 316.5,635.1 315.8,636.9 314.5,638.2 308.9,635.7 317.5,645.9 312.7,644.0 313.6,647.5 305.4,641.8 305.0,644.0 296.8,637.5 301.9,645.7 298.7,644.7 300.9,650.1 295.0,645.4 298.8,653.4 295.8,652.3 290.5,647.8 287.5,646.1 288.6,650.9 284.2,646.8 294.5,667.8 285.0,654.7 283.3,655.3 283.0,658.4 282.2,660.8 275.4,650.1 276.2,655.9 276.5,660.9 277.5,668.3 269.5,652.2 271.7,663.1 266.8,653.8 269.2,667.1 265.5,660.4 265.8,668.4 263.9,668.1 262.3,669.4 259.1,662.5 260.8,680.9 256.2,665.6 255.6,673.8 252.4,662.6 251.1,666.9 249.1,662.9 248.5,679.8 246.8,685.5 244.9,693.1 242.5,670.2 240.7,669.9 239.1,662.8 236.5,683.2 235.7,664.3 232.7,680.2 232.1,666.7 229.2,675.8 228.1,670.1 224.2,682.7 226.5,658.8 221.1,677.6 218.3,681.1 215.0,685.9 220.7,655.7 208.2,694.2 214.9,664.0 208.0,679.7 211.6,663.0 195.3,702.1 208.1,662.3 193.2,693.9 195.3,683.0 197.1,673.6 201.2,660.3 196.6,665.6 206.4,642.8 189.1,671.2 191.5,663.0 183.8,672.0 194.4,651.2 186.5,660.2 182.4,662.8 181.3,660.9 190.2,645.6 169.5,669.8 172.7,662.1 164.9,668.2 173.0,655.4 161.8,664.8 168.8,654.0 153.4,667.0 166.2,650.8 154.5,659.3 161.6,649.7 155.2,652.5 166.0,640.5 159.4,643.4 166.0,635.7 163.1,635.5 169.2,628.8 167.5,627.9 172.1,622.8 171.7,621.1 172.7,618.7 165.9,620.9 161.6,621.4 154.3,623.3 153.3,621.7 148.6,621.9 148.0,620.0 139.2,621.8 146.9,616.2 138.6,617.4 138.4,615.3 129.5,616.2 133.8,612.4 124.8,612.9 127.4,609.7 123.4,608.5 125.0,605.7 128.8,602.4 134.4,599.0 132.8,597.2 145.7,592.8 145.9,590.9 159.0,587.3 160.2,585.5 171.7,582.9 161.2,582.3 164.3,580.6 162.3,579.2 165.1,577.7 161.4,576.2 163.5,574.7 158.8,573.0 161.7,571.6 154.4,569.5 147.8,567.2 152.1,565.9 152.1,564.2 141.6,560.9 142.0,559.0 124.4,553.6 127.3,551.9 118.6,547.6 115.9,544.4 115.7,541.8 128.4,543.0 124.0,539.2 135.0,540.4 128.1,535.7 128.6,533.4 133.2,532.8 146.9,536.2 133.1,527.9 137.7,527.6 133.0,522.8 153.8,530.9 147.1,525.2 156.2,528.0 153.4,524.1 159.6,525.7 156.4,521.4 164.6,524.6 158.6,518.3 163.4,519.3 161.4,515.5 168.1,518.4 161.6,510.8 166.7,512.5 164.9,508.4 169.3,509.8 166.7,504.8 172.2,507.4 170.4,503.0 176.4,506.5 171.6,498.4 177.4,502.1 174.2,495.3 182.2,502.2 178.3,494.1 185.1,500.0 180.6,490.6 182.3,489.5 181.5,484.7 189.1,492.8 189.7,490.1 192.5,491.2 191.3,485.2 196.9,491.4 193.9,481.6 197.4,484.1 198.7,482.2 203.9,489.2 202.2,480.4 206.4,485.7 206.1,479.5 209.5,483.3 211.0,481.9 212.7,481.0 214.0,478.8 216.2,479.7 217.3,476.0 220.2,480.2 221.5,476.8 224.0,479.7 225.0,474.6 228.8,487.0 229.8,481.2 232.8,492.5 233.6,482.6 235.7,488.3 237.3,485.3 239.0,486.7 240.7,482.6 242.4,493.1 244.2,485.5 245.7,490.1 247.7,484.2 249.1,488.9 251.4,483.4 251.5,496.9 253.1,496.2 254.2,499.1 258.0,486.5 258.8,491.2 262.8,481.0 260.8,497.1 266.1,483.2 264.1,496.7 267.5,490.9 264.7,505.2 269.0,497.1 269.8,499.5 273.9,493.3 272.2,501.9 277.8,492.8 270.4,513.2 273.8,509.2 276.7,506.5 280.6,502.3 277.9,510.5 283.3,504.0 279.5,513.4 285.0,507.2 281.3,515.7 284.5,513.5 283.6,517.3 293.0,506.8 289.3,514.4 299.8,503.6 300.6,505.4 303.0,505.3 301.0,510.2 304.5,508.9 298.6,517.6 301.0,517.4 295.7,524.6 302.3,520.5 298.2,526.2 299.7,526.8 293.4,533.9 295.3,534.0 292.3,537.9 293.9,538.2 293.1,540.2 303.0,535.1 303.0,536.7 308.4,535.0 303.1,539.9 318.8,532.6 319.6,534.1 325.9,532.8 315.9,539.7 325.6,536.9 327.9,537.8 330.4,538.7 330.8,540.5 333.8,541.3 327.3,545.6 330.0,546.5 320.2,551.5 332.8,549.4 329.3,552.2 335.3,552.5 326.1,556.5 321.4,559.2 318.6,561.4 336.0,559.9 327.6,563.0 334.7,563.7 325.3,566.6 332.0,567.6 329.3,569.5 332.5,571.0 325.2,573.0 331.8,574.5 323.8,576.2" fill="none" stroke="#c8c018" stroke-width="1.3" stroke-linejoin="bevel"/><path d="M12 491L471 662" stroke="#8a8000" stroke-width="1.2"/><path d="M12 471L471 686" stroke="#f4f4f4" stroke-width="1.4"/></g></svg><div class="a" style="left:12px;top:703px;width:459px;height:1px;background:#fff"></div><div class="a" style="left:471px;top:449px;width:1px;height:254px;background:#fff"></div><div class="a" style="left:479px;top:568px;width:2px;height:17px;background:#858585"></div><div class="a" style="left:234px;top:712px;width:17px;height:2px;background:#858585"></div><div class="a" style="left:484px;top:711px;width:2px;height:2px;background:#b0b0b0"></div><div class="a" style="left:481px;top:714px;width:2px;height:2px;background:#b0b0b0"></div><div class="a" style="left:484px;top:714px;width:2px;height:2px;background:#b0b0b0"></div><div class="a" style="left:478px;top:717px;width:2px;height:2px;background:#b0b0b0"></div><div class="a" style="left:481px;top:717px;width:2px;height:2px;background:#b0b0b0"></div><div class="a" style="left:484px;top:717px;width:2px;height:2px;background:#b0b0b0"></div><div class="a" style="left:17px;top:452px;width:137px;height:20px;background:#fff"></div><div class="a hm" style="left:19px;top:455px;color:#000;">11:47:43 UT </div><div class="a jm" style="left:91px;top:455px;color:#000;">食分</div><div class="a hm" style="left:115px;top:455px;color:#000;">:0.973</div><svg style="left:508px;top:449px" width="475" height="272" viewBox="508 449 475 272"><defs><clipPath id="mc"><rect x="508" y="449" width="475" height="272"/></clipPath><linearGradient id="oce" x1="0" y1="0" x2="1" y2="0"><stop offset="0" stop-color="#040a1c"/><stop offset="0.45" stop-color="#03060f"/><stop offset="1" stop-color="#040404"/></linearGradient><linearGradient id="shade" gradientUnits="userSpaceOnUse" x1="752" y1="617" x2="819" y2="590"><stop offset="0" stop-color="#eef2f4"/><stop offset="0.3" stop-color="#d4d7d9"/><stop offset="0.55" stop-color="#8c8e90"/><stop offset="0.8" stop-color="#505254"/><stop offset="1" stop-color="#393a3c"/></linearGradient><linearGradient id="shade2" gradientUnits="userSpaceOnUse" x1="830" y1="625" x2="970" y2="592"><stop offset="0" stop-color="#000" stop-opacity="0"/><stop offset="1" stop-color="#000" stop-opacity="0.32"/></linearGradient><filter id="icetex" x="0" y="0" width="1" height="1"><feTurbulence type="fractalNoise" baseFrequency="0.6" numOctaves="2" seed="5"/><feColorMatrix values="0 0 0 0 0.3  0 0 0 0 0.4  0 0 0 0 0.55  0 0 0 0.6 -0.2"/><feComposite in2="SourceGraphic" operator="in"/></filter></defs><g clip-path="url(#mc)"><rect x="508" y="449" width="475" height="272" fill="url(#oce)"/><path d="M507 638.2L514 638.2L524 640.2L530.1 634.2L533.1 622.2L531.1 604.1L536.1 592L536 586L523.5 573.6L540.3 571L544.2 562.4L557 556.9L576.1 551.3L596.8 533.7L598.4 522.6L592.9 513L599.2 503.8L618.4 515L634.5 510.3L641 499L647.4 505.4L673 515L686 510.3L692.3 502.2L711.6 495.8L720 488L723.2 489.6L721.6 496L726.4 508.9L752.1 510.5L757 492.9L765 499.3L776.2 494.5L790.7 490.4L795.5 499.3L810 500.9L816.4 505.7L832.5 510.5L842.1 500.9L853.4 500.9L859.8 512.1L864.6 526.6L880 536.2L884.3 539.9L903.7 544.8L923.2 554.5L916.7 573.9L932.9 593.4L942.6 609.6L949.1 625.7L965.3 648.4L962 680.8L945.8 693.8L923.2 697L903.7 706.7L887.5 719.7L885 722L507 722Z" fill="url(#shade)"/><path d="M507 638.2L514 638.2L524 640.2L530.1 634.2L533.1 622.2L531.1 604.1L536.1 592L536 586L523.5 573.6L540.3 571L544.2 562.4L557 556.9L576.1 551.3L596.8 533.7L598.4 522.6L592.9 513L599.2 503.8L618.4 515L634.5 510.3L641 499L647.4 505.4L673 515L686 510.3L692.3 502.2L711.6 495.8L720 488L723.2 489.6L721.6 496L726.4 508.9L752.1 510.5L757 492.9L765 499.3L776.2 494.5L790.7 490.4L795.5 499.3L810 500.9L816.4 505.7L832.5 510.5L842.1 500.9L853.4 500.9L859.8 512.1L864.6 526.6L880 536.2L884.3 539.9L903.7 544.8L923.2 554.5L916.7 573.9L932.9 593.4L942.6 609.6L949.1 625.7L965.3 648.4L962 680.8L945.8 693.8L923.2 697L903.7 706.7L887.5 719.7L885 722L507 722Z" fill="url(#shade2)"/><path d="M507 638.2L514 638.2L524 640.2L530.1 634.2L533.1 622.2L531.1 604.1L536.1 592L536 586L523.5 573.6L540.3 571L544.2 562.4L557 556.9L576.1 551.3L596.8 533.7L598.4 522.6L592.9 513L599.2 503.8L618.4 515L634.5 510.3L641 499L647.4 505.4L673 515L686 510.3L692.3 502.2L711.6 495.8L720 488L723.2 489.6L721.6 496L726.4 508.9L752.1 510.5L757 492.9L765 499.3L776.2 494.5L790.7 490.4L795.5 499.3L810 500.9L816.4 505.7L832.5 510.5L842.1 500.9L853.4 500.9L859.8 512.1L864.6 526.6L880 536.2L884.3 539.9L903.7 544.8L923.2 554.5L916.7 573.9L932.9 593.4L942.6 609.6L949.1 625.7L965.3 648.4L962 680.8L945.8 693.8L923.2 697L903.7 706.7L887.5 719.7L885 722L507 722Z" fill="#fff" filter="url(#icetex)" opacity="0.22"/><path d="M524 640L538 660L545 690L560 721L530 721L520 680Z" fill="#b8cce4" opacity="0.25"/><path d="M746.0 882.5L-85.8 327.4" stroke="#2f6680" stroke-width="1.3"/><path d="M746.0 882.5L15.8 199.2" stroke="#2f6680" stroke-width="1.3"/><path d="M746.0 882.5L137.0 89.4" stroke="#2f6680" stroke-width="1.3"/><path d="M746.0 882.5L274.4 0.7" stroke="#2f6680" stroke-width="1.3"/><path d="M746.0 882.5L424.4 -64.4" stroke="#2f6680" stroke-width="1.3"/><path d="M746.0 882.5L583.0 -104.1" stroke="#2f6680" stroke-width="1.3"/><path d="M746.0 882.5L746.0 -117.5" stroke="#2f6680" stroke-width="1.3"/><path d="M746.0 882.5L909.0 -104.1" stroke="#2f6680" stroke-width="1.3"/><path d="M746.0 882.5L1067.6 -64.4" stroke="#2f6680" stroke-width="1.3"/><path d="M746.0 882.5L1217.6 0.7" stroke="#2f6680" stroke-width="1.3"/><path d="M746.0 882.5L1355.0 89.4" stroke="#2f6680" stroke-width="1.3"/><path d="M746.0 882.5L1476.2 199.2" stroke="#2f6680" stroke-width="1.3"/><path d="M746.0 882.5L1577.8 327.4" stroke="#2f6680" stroke-width="1.3"/><circle cx="746.0" cy="882.5" r="166.5" fill="none" stroke="#2f6680" stroke-width="1.3"/><circle cx="746.0" cy="882.5" r="322.5" fill="none" stroke="#2f6680" stroke-width="1.3"/><circle cx="746.0" cy="882.5" r="475" fill="none" stroke="#2f6680" stroke-width="1.3"/><path d="M540,440C542.0,445.4 542.5,458.6 552.2,472.4C561.9,486.2 584.3,511.1 598,523C611.7,534.9 623.1,538.4 634.5,544C645.9,549.6 655.9,553.2 666.6,556.8C677.3,560.4 688.1,563.5 698.8,565.5C709.5,567.5 720.2,568.8 730.9,569C741.6,569.2 752.8,569.3 763,566.5C773.2,563.7 787.2,554.4 792,552" fill="none" stroke="#f4a8a8" stroke-width="1.5"/><path d="M495,480C497.2,483.2 501.2,490.0 508.4,499.5C515.5,509.0 526.6,525.9 537.9,536.9C549.2,547.9 567.0,558.6 576.1,565.6C585.2,572.6 586.6,574.9 592.3,579C598.0,583.1 600.3,585.1 610.4,590C620.5,594.9 636.7,603.1 652.6,608.1C668.5,613.1 690.3,617.9 706,620.2C721.7,622.5 734.5,622.2 746.6,621.8C758.7,621.4 765.6,620.9 778.7,617.8C791.8,614.7 817.5,605.7 825.3,603.3" fill="none" stroke="#f01818" stroke-width="1.8"/><path d="M495,545C497.2,547.5 502.5,554.2 508.4,560C514.2,565.8 519.5,571.6 530.1,580C540.8,588.4 558.9,601.7 572.3,610.1C585.7,618.5 594.7,623.5 610.4,630.2C626.1,636.9 650.7,645.4 666.6,650.3C682.5,655.1 692.7,657.4 706,659.3C719.3,661.2 731.5,662.0 746.6,661.9C761.7,661.8 779.3,661.8 796.4,658.7C813.5,655.6 840.6,646.0 849.4,643.5" fill="none" stroke="#f4a8a8" stroke-width="1.5"/><path d="M560,440C561.4,441.5 561.5,443.9 568.6,449.2C575.7,454.5 588.7,462.9 602.4,471.7C616.1,480.5 634.5,490.7 650.6,502.2C666.7,513.7 682.7,527.1 698.8,540.8C714.9,554.5 734.0,571.8 747,584.2C760.0,596.6 763.9,601.3 777.1,615.3C790.3,629.3 810.8,650.6 826,668C841.2,685.4 859.9,708.5 868.1,719.7C876.3,730.9 873.9,732.5 875,735" fill="none" stroke="#e8ac10" stroke-width="1.6"/><path d="M705,440C706.1,441.5 704.1,441.8 711.6,449.2C719.1,456.6 737.4,469.6 750.2,484.6C763.1,499.6 776.1,519.8 788.7,539.2C801.3,558.6 814.1,580.3 826,601C837.9,621.7 849.8,643.7 860,663.5C870.2,683.3 882.2,707.8 887.5,719.7C892.8,731.6 891.2,732.5 892,735" fill="none" stroke="#f0e010" stroke-width="1.6"/><path d="M815,440C815.8,441.6 816.0,442.9 819.5,449.6C823.0,456.3 831.1,471.4 835.7,480C840.3,488.6 841.9,491.0 847,501.4C852.1,511.8 860.8,527.1 866.5,542.4C872.2,557.7 875.4,574.1 881,593.4C886.6,612.7 894.6,637.0 900,658C905.4,679.0 910.6,706.9 913.4,719.7C916.2,732.5 916.4,732.5 917,735" fill="none" stroke="#e8ac10" stroke-width="1.6"/><path d="M824.5,598.5C818.5,601.3 799.2,610.1 788.4,615.3C777.5,620.5 768.3,624.8 759.4,629.8C750.5,634.8 741.9,640.3 735,645C728.1,649.7 719.8,655.4 718,658C716.2,660.6 717.1,661.9 724,660.5C730.9,659.1 747.3,654.9 759.4,649.9C771.5,644.9 784.1,636.1 796.4,630.6C808.7,625.1 827.1,618.9 833.3,616.6" fill="none" stroke="#80f080" stroke-width="1.5"/><path d="M745 640.5H775.5M759.8 625.8V656.3" stroke="#f01818" stroke-width="1.6"/><circle cx="537.5" cy="537" r="2.2" fill="#f01818"/><text x="538" y="549.5" font-family="Liberation Sans" font-size="11.5" fill="#ff2020" textLength="85" lengthAdjust="spacingAndGlyphs">Greatest Eclipse</text></g></svg><div class="a" style="left:511px;top:452px;width:317px;height:20px;background:#fff"></div><div class="a hm" style="left:514px;top:455px;color:#000;">11:47:43 UT </div><div class="a jm" style="left:586px;top:455px;color:#000;">食分</div><div class="a hm" style="left:610px;top:455px;color:#000;">:0.973  123°19’56”E 75°05’59”S 3233m</div></div></body></html>
